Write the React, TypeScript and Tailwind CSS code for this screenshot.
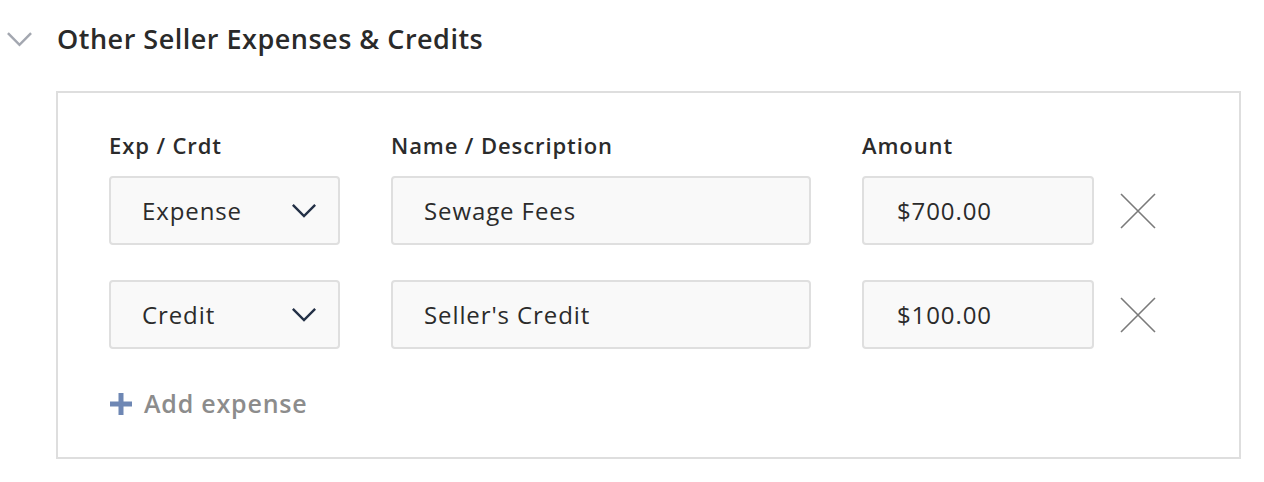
const rows = [
  { kind: 'Expense', name: 'Sewage Fees', amount: '$700.00' },
  { kind: 'Credit', name: "Seller's Credit", amount: '$100.00' },
];

function Chevron({ className }: { className: string }) {
  return (
    <svg viewBox="0 0 28 16" fill="none" className={className}>
      <path d="M2 2l12 12L26 2" stroke="currentColor" strokeWidth="2.6" />
    </svg>
  );
}

function CloseIcon() {
  return (
    <svg viewBox="0 0 36 36" className="h-[36px] w-[36px] text-[#7a7a7a]">
      <path d="M1 1l34 34M35 1L1 35" stroke="currentColor" strokeWidth="1.6" />
    </svg>
  );
}

export default function App() {
  return (
    <div className="h-[482px] w-[1264px] bg-white font-['Open_Sans',sans-serif] text-[#2b2b2b]">
      <div className="flex items-center pt-[24px]">
        <Chevron className="ml-[6px] h-[16px] w-[27px] text-[#a3a7b0]" />
        <h2 className="ml-[24px] text-[27px] font-semibold leading-[30px] tracking-[0.5px] text-[#2a2a2a]">
          Other Seller Expenses &amp; Credits
        </h2>
      </div>

      <div className="ml-[56px] mt-[37px] w-[1185px] border-2 border-[#dedede] px-[51px] pb-[34px] pt-[38px]">
        <div className="flex text-[22px] font-semibold leading-[28px] tracking-[0.9px]">
          <div className="w-[282px]">Exp / Crdt</div>
          <div className="w-[471px]">Name / Description</div>
          <div>Amount</div>
        </div>

        <div className="mt-[17px] flex flex-col gap-[35px]">
          {rows.map((r) => (
            <div key={r.name} className="flex items-center text-[24px] tracking-[0.9px]">
              <div className="flex h-[69px] w-[231px] items-center justify-between rounded-[4px] border-2 border-[#dfdfdf] bg-[#f9f9f9] pl-[31px] pr-[21px]">
                <span>{r.kind}</span>
                <Chevron className="h-[15px] w-[26px] text-[#233046]" />
              </div>
              <div className="ml-[51px] flex h-[69px] w-[420px] items-center rounded-[4px] border-2 border-[#dfdfdf] bg-[#f9f9f9] pl-[31px]">
                {r.name}
              </div>
              <div className="ml-[51px] flex h-[69px] w-[232px] items-center rounded-[4px] border-2 border-[#dfdfdf] bg-[#f9f9f9] pl-[33px]">
                {r.amount}
              </div>
              <div className="ml-[26px]">
                <CloseIcon />
              </div>
            </div>
          ))}
        </div>

        <div className="mt-[36px] flex items-center text-[25px] font-semibold tracking-[0.8px] text-[#8c8c8c]">
          <svg viewBox="0 0 24 24" className="h-[24px] w-[24px] text-[#6e87b4]">
            <path d="M12 1v22M1 12h22" stroke="currentColor" strokeWidth="5" />
          </svg>
          <span className="ml-[11px]">Add expense</span>
        </div>
      </div>
    </div>
  );
}
